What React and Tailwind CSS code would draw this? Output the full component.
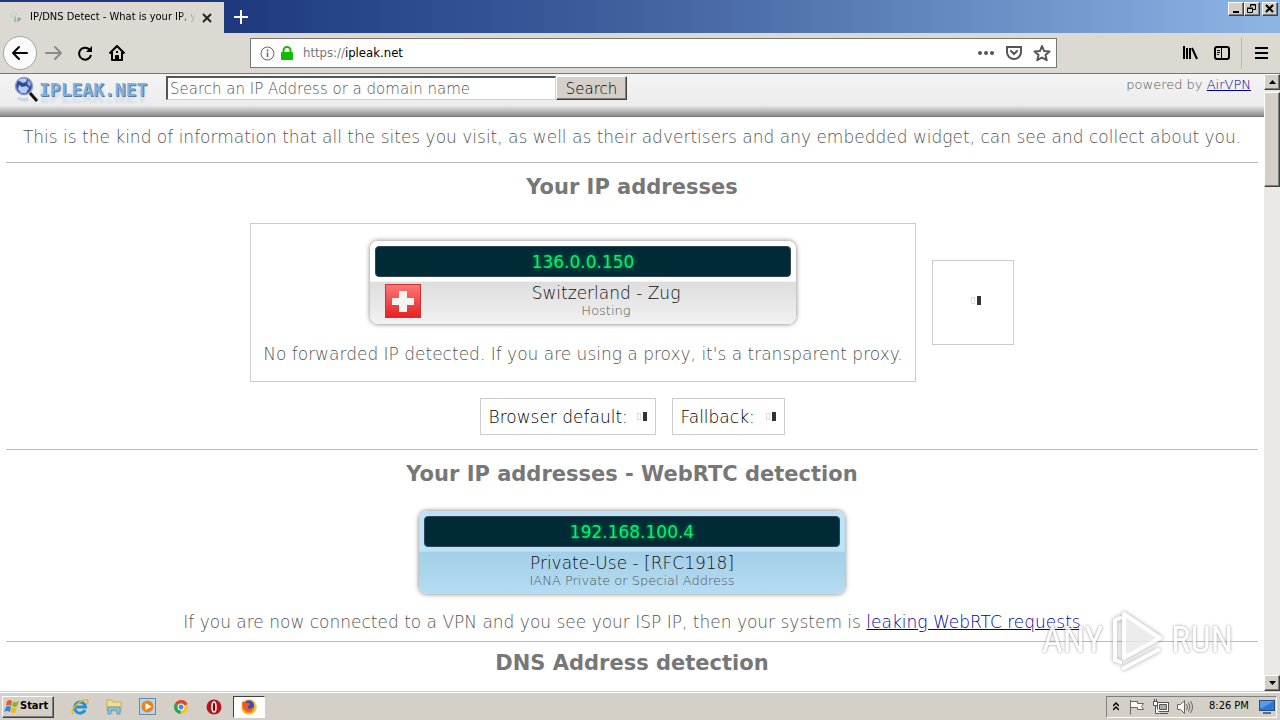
import { useState } from 'react';
import clsx from 'clsx';

const raised = 'border border-t-white border-l-white border-r-[#404040] border-b-[#404040] bg-[#d4d0c8] shadow-[inset_-1px_-1px_0_#808080]';

const TitleBar = () => (
  <div className="flex h-[33px] shrink-0 bg-linear-to-r from-[#1c357c] from-15% via-[#41619f] via-50% to-[#8db6e6]">
    <div className="mt-[2px] flex w-[224px] items-center bg-[#dcd8d2] pl-[10px]">
      <svg width="13" height="14" viewBox="0 0 13 14" className="shrink-0">
        <path d="M0 3h2M3 1h2M1 5l2 1M4 4l2 2M6 2l1 2" stroke="#8fd6ca" strokeWidth="1" />
        <path d="M5 6v5M8 11V7h2q1 1 0 2H8" stroke="#6fa56f" strokeWidth="1" fill="none" />
      </svg>
      <span className="ml-[7px] w-[166px] whitespace-nowrap bg-linear-to-r from-black from-90% to-transparent bg-clip-text text-[11px] text-transparent">
        IP/DNS Detect - What is your IP, y
      </span>
      <button aria-label="Close tab" className="ml-[5px]">
        <svg width="12" height="12" viewBox="0 0 12 12" stroke="#222" strokeWidth="2">
          <path d="M2 2l8 8M10 2l-8 8" />
        </svg>
      </button>
    </div>
    <button aria-label="New tab" className="ml-[9px] flex items-center">
      <svg width="16" height="16" viewBox="0 0 16 16" stroke="#fff" strokeWidth="2">
        <path d="M8 1v14M1 8h14" />
      </svg>
    </button>
    <div className="ml-auto flex h-[16px] pt-[2px] pr-[2px]">
      <button aria-label="Minimize" className={clsx(raised, 'h-[14px] w-[16px]')}>
        <svg width="13" height="12" viewBox="0 0 13 12"><path d="M4 8h6v2H4z" /></svg>
      </button>
      <button aria-label="Restore" className={clsx(raised, 'h-[14px] w-[16px]')}>
        <svg width="13" height="12" viewBox="0 0 13 12" fill="none" stroke="#000">
          <path d="M5.5 4V1.5h5v5H8M5 2h6M2.5 5.5h5v4h-5zM2 5h6" />
        </svg>
      </button>
      <button aria-label="Close" className={clsx(raised, 'ml-[2px] h-[14px] w-[16px]')}>
        <svg width="13" height="12" viewBox="0 0 13 12" stroke="#000" strokeWidth="2"><path d="M3 2l7 7M10 2L3 9" /></svg>
      </button>
    </div>
  </div>
);

const NavBar = () => (
  <div className="flex h-[41px] shrink-0 items-center border-b border-[#777] bg-[#dcd8d2] pl-[3px]">
    <button aria-label="Back" className="flex h-[34px] w-[34px] items-center justify-center rounded-full border border-[#a8a49e] bg-[#fafafa]">
      <svg width="18" height="16" viewBox="0 0 18 16" fill="none" stroke="#000" strokeWidth="2" strokeLinecap="round" strokeLinejoin="round">
        <path d="M16 8H2M8 2L2 8l6 6" />
      </svg>
    </button>
    <button aria-label="Forward" className="ml-[8px]">
      <svg width="18" height="16" viewBox="0 0 18 16" fill="none" stroke="#8d8a86" strokeWidth="2" strokeLinecap="round" strokeLinejoin="round">
        <path d="M1 8h15M10 2l6 6-6 6" />
      </svg>
    </button>
    <button aria-label="Reload" className="ml-[14px]">
      <svg width="16" height="16" viewBox="0 0 16 16" fill="none" stroke="#000" strokeWidth="2">
        <path d="M12.5 4.5A6 6 0 1 0 14 10" />
        <path d="M15 1v6H9z" fill="#000" stroke="none" />
      </svg>
    </button>
    <button aria-label="Home" className="ml-[15px]">
      <svg width="18" height="16" viewBox="0 0 18 16" fill="none" stroke="#000" strokeWidth="2" strokeLinejoin="round">
        <path d="M1.500 8.500L9 1l7.500 7.500M4 7v8h10V7" />
        <path d="M8 15v-4h2v4M9 6v2" />
      </svg>
    </button>
    <div className="ml-[124px] flex h-[30px] w-[807px] items-center border border-[#777] bg-white pr-[5px] pl-[9px]">
      <svg width="15" height="15" viewBox="0 0 15 15" fill="none" stroke="#666">
        <circle cx="7.500" cy="7.500" r="6.500" />
        <path d="M7.500 6.500V11M7.500 3.500v2" strokeWidth="1.500" />
      </svg>
      <svg width="12" height="15" viewBox="0 0 12 15" className="ml-[6px]">
        <path d="M2.500 7V4.500a3.500 3.500 0 0 1 7 0V7" fill="none" stroke="#12bc00" strokeWidth="2" />
        <rect y="6" width="12" height="8" rx="1" fill="#12bc00" />
      </svg>
      <span className="ml-[10px] grow text-[13px] text-black"><span className="text-[#777]">https://</span>ipleak.net</span>
      <button aria-label="Page actions">
        <svg width="16" height="16" viewBox="0 0 16 16" fill="#555">
          <circle cx="2" cy="8" r="2" /><circle cx="8" cy="8" r="2" /><circle cx="14" cy="8" r="2" />
        </svg>
      </button>
      <button aria-label="Save to Pocket" className="ml-[12px]">
        <svg width="16" height="16" viewBox="0 0 16 16" fill="none" stroke="#555" strokeWidth="2" strokeLinecap="round">
          <path d="M1 2h14v5a7 7 0 0 1-14 0z" /><path d="M5 6l3 3 3-3" />
        </svg>
      </button>
      <button aria-label="Bookmark" className="ml-[11px]">
        <svg width="18" height="18" viewBox="0 0 18 18" fill="none" stroke="#555" strokeWidth="2" strokeLinejoin="round">
          <path d="M9 2l2 5 5.500.500-4 3.500 1.200 5.200L9 13.500l-4.700 2.700L5.500 11l-4-3.500L7 7z" />
        </svg>
      </button>
    </div>
    <div className="ml-auto flex items-center">
      <button aria-label="Library">
        <svg width="16" height="16" viewBox="0 0 16 16" stroke="#000" strokeWidth="2">
          <path d="M2 1v13M5 3v11M8 3v11M10 3l5 11" />
        </svg>
      </button>
      <button aria-label="Sidebars" className="ml-[16px]">
        <svg width="16" height="14" viewBox="0 0 16 14" fill="none" stroke="#000" strokeWidth="2">
          <rect x="1" y="1" width="14" height="12" rx="2" /><path d="M7.500 1v12" strokeWidth="1" />
          <path d="M3 4.500h3M3 6.500h3M3 8.500h2" strokeWidth="1" />
        </svg>
      </button>
      <div className="ml-[11px] h-[32px] w-px bg-[#bcb8b0]" />
      <button aria-label="Menu" className="mr-[12px] ml-[13px]">
        <svg width="13" height="14" viewBox="0 0 13 14" stroke="#000" strokeWidth="2"><path d="M0 2h13M0 7h13M0 12h13" /></svg>
      </button>
    </div>
  </div>
);

const SiteHeader = () => {
  const [query, setQuery] = useState('');
  return (
    <header className="flex h-[43px] items-start border-b border-[#777] bg-linear-to-b from-[#f4f4f4] via-[#ececec] via-75% to-[#8c8c8c] pl-[14px]">
      <svg width="25" height="28" viewBox="0 0 25 28" className="mt-[2px] shrink-0">
        <circle cx="10" cy="10" r="8.500" fill="#34499c" stroke="#8d9cc9" strokeWidth="1.500" />
        <path d="M4 4q5-3 9-1l-1 3-3 1-2-1zM5 9l3 2 4-1 3 2-3 5-5 0-3-4z" fill="#b9caf0" />
        <path d="M14 4l3 3-1 4-3-3z" fill="#8fa8e0" />
        <path d="M16 17l7 8" stroke="#111" strokeWidth="3" />
        <path d="M4 22q5 3 10 1" stroke="#ccd5de" strokeWidth="3" fill="none" />
      </svg>
      <span className="mt-[4px] w-[109px] whitespace-nowrap font-['DejaVu_Sans_Mono',monospace] text-[18px] leading-[24px] font-bold text-[#7fb0da] [text-shadow:1px_1px_0_#5878a0,0_7px_3px_#d0dde8]">IPLEAK.NET</span>
      <form className="mt-[2px] ml-[18px] flex h-[24px]" onSubmit={(e) => e.preventDefault()}>
        <input
          aria-label="Search an IP Address or a domain name"
          placeholder="Search an IP Address or a domain name"
          value={query}
          onChange={(e) => setQuery(e.target.value)}
          className="w-[390px] border-t-2 border-r border-b border-l-2 border-t-[#555] border-r-[#d4d0c8] border-b-[#d4d0c8] border-l-[#555] bg-white pt-[2px] pl-[2px] text-[15px] text-black placeholder:text-[#555]"
        />
        <button className={clsx(raised, 'w-[71px] pt-[2px] text-[15px] leading-[20px] text-black')}>Search</button>
      </form>
      <div className="mt-[2px] mr-[13px] ml-auto text-[13px] leading-[18px]">
        powered by <a href="#airvpn" className="text-[#0000a0] underline">AirVPN</a>
      </div>
    </header>
  );
};

const Loading = () => (
  <span role="img" aria-label="Loading" className="flex items-center gap-[2px]">
    <span className="h-[7px] w-[4px] border border-[#ddd]" />
    <span className="h-[9px] w-[4px] bg-[#333]" />
  </span>
);

const SwissFlag = () => (
  <svg width="36" height="34" viewBox="0 0 36 34" className="shrink-0">
    <defs>
      <linearGradient id="flag" x2="0" y2="1"><stop stopColor="#f77" /><stop offset="1" stopColor="#e42222" /></linearGradient>
    </defs>
    <rect x=".5" y=".5" width="35" height="33" fill="url(#flag)" stroke="#c33" />
    <path d="M14 7h8v7h7v7h-7v7h-8v-7H7v-7h7z" fill="#f4f4f4" />
  </svg>
);

const IpCard = ({ ip, place, note, flag, priv }) => (
  <div
    className={clsx(
      'w-[426px] rounded-[8px] p-[5px] shadow-[0_0_5px_#777]',
      priv
        ? 'bg-linear-to-b from-[#bde2f8] from-48% via-[#a3cfe8] via-50% to-[#b5dcf3]'
        : 'bg-linear-to-b from-white from-48% via-[#dedede] via-50% to-[#f1f1f1]'
    )}
  >
    <div className="h-[31px] rounded-[4px] border border-[#345] bg-[#002b36] text-center text-[17px] leading-[30px] font-normal text-[#00f070] [text-shadow:0_0_4px_#00a050]">{ip}</div>
    <div className="mt-[7px] flex h-[35px] items-start">
      {flag && <div className="pl-[10px]"><SwissFlag /></div>}
      <div className="grow text-center">
        <div className="text-[17px] leading-[19px] text-[#111]">{place}</div>
        <div className="text-[13px] leading-[15px] text-[#555]">{note}</div>
      </div>
    </div>
  </div>
);

const Heading = ({ children }) => (
  <h2 className="text-center text-[21px] leading-[26px] font-bold text-[#777]">{children}</h2>
);

const Page = () => (
  <div className="min-w-0 grow overflow-hidden bg-white font-[Verdana,'DejaVu_Sans',sans-serif] font-extralight text-[#555]">
    <SiteHeader />
    <main className="px-[6px] text-[17px] leading-[20px]">
      <p className="pt-[10px] pb-[15px] text-center whitespace-nowrap">
        This is the kind of information that all the sites you visit, as well as their advertisers and any embedded widget, can see and collect about you.
      </p>
      <section className="border-t border-[#bbb] pt-[11px] pb-[14px]">
        <Heading>Your IP addresses</Heading>
        <div className="mt-[23px] flex items-center justify-center gap-[16px]">
          <div className="flex h-[159px] w-[666px] flex-col items-center border border-[#ccc] pt-[17px]">
            <IpCard ip="136.0.0.150" place="Switzerland - Zug" note="Hosting" flag />
            <p className="mt-[20px] whitespace-nowrap">No forwarded IP detected. If you are using a proxy, it's a transparent proxy.</p>
          </div>
          <div className="flex h-[85px] w-[82px] items-center justify-center border border-[#ccc] pb-[4px] pl-[6px]">
            <Loading />
          </div>
        </div>
        <div className="mt-[16px] flex justify-center gap-[16px] text-black">
          <div className="flex h-[37px] w-[176px] items-center justify-between border border-[#ccc] px-[8px]">Browser default: <Loading /></div>
          <div className="flex h-[37px] w-[113px] items-center justify-between border border-[#ccc] px-[8px]">Fallback: <Loading /></div>
        </div>
      </section>
      <section className="border-t border-[#bbb] pt-[11px] pb-[9px]">
        <Heading>Your IP addresses - WebRTC detection</Heading>
        <div className="mt-[24px] flex justify-center">
          <IpCard ip="192.168.100.4" place="Private-Use - [RFC1918]" note="IANA Private or Special Address" priv />
        </div>
        <p className="mt-[18px] text-center whitespace-nowrap">
          If you are now connected to a VPN and you see your ISP IP, then your system is <a href="#webrtc" className="text-[#0000a0] underline">leaking WebRTC requests</a>
        </p>
      </section>
      <section className="border-t border-[#bbb] pt-[8px]">
        <Heading>DNS Address detection</Heading>
      </section>
    </main>
  </div>
);

const Scrollbar = () => (
  <div className="flex w-[16px] shrink-0 flex-col bg-[#ebe9e5]">
    <button aria-label="Scroll up" className={clsx(raised, 'flex h-[16px] items-center justify-center')}>
      <svg width="7" height="4" viewBox="0 0 7 4"><path d="M0 4h7L3.500 0z" /></svg>
    </button>
    <div className={clsx(raised, 'mt-[2px] h-[95px]')} />
    <button aria-label="Scroll down" className={clsx(raised, 'mt-auto flex h-[16px] items-center justify-center')}>
      <svg width="7" height="4" viewBox="0 0 7 4"><path d="M0 0h7L3.500 4z" /></svg>
    </button>
  </div>
);

const Taskbar = () => (
  <div className="flex h-[28px] shrink-0 items-center border-t border-white bg-[#d4d0c8]">
    <button className={clsx(raised, 'ml-[2px] flex h-[22px] w-[52px] items-center pl-[1px] text-[11px] font-bold')}>
      <svg width="16" height="16" viewBox="0 0 16 16" className="shrink-0">
        <path d="M3 2q3-2 5 0L7 7Q5 5 2 7z" fill="#e8592b" />
        <path d="M9 3q3 1 6-1l-2 5q-2 2-5 0z" fill="#7db928" />
        <path d="M2 8q3-2 5 0l-1 5q-3-2-6 0z" fill="#2f87d8" />
        <path d="M8 8q2 2 5 0l-2 6q-2 1-4-1z" fill="#f5b71c" />
      </svg>
      Start
    </button>
    <div className="ml-[17px] flex items-center gap-[17px]">
      <button aria-label="Internet Explorer">
        <svg width="18" height="18" viewBox="0 0 18 18" fill="none">
          <path d="M14 12a5.500 5.500 0 1 1 .500-3H5" stroke="#238fd6" strokeWidth="3" />
          <path d="M2 16C-1 12 9 1 16 2q2 1 0 4" stroke="#e3b62f" strokeWidth="1.500" />
        </svg>
      </button>
      <button aria-label="Explorer">
        <svg width="16" height="18" viewBox="0 0 16 18">
          <path d="M1 2h5l1 2h8v9H1z" fill="#f3dc86" stroke="#c9ac50" />
          <path d="M2 9h12v7h-3v-4H5v4H2z" fill="#8ac5e8" stroke="#5798c2" />
        </svg>
      </button>
      <button aria-label="Media Player">
        <svg width="17" height="17" viewBox="0 0 17 17">
          <rect x=".5" y=".5" width="16" height="16" fill="#b7d5ed" stroke="#5a8dbb" />
          <circle cx="8.500" cy="8.500" r="6" fill="#ef8118" /><path d="M6.500 5v7l6-3.500z" fill="#fff" />
        </svg>
      </button>
      <button aria-label="Chrome">
        <svg width="16" height="16" viewBox="0 0 16 16">
          <circle cx="8" cy="8" r="7" fill="#f4c623" />
          <path d="M8 8L2 4.500A7 7 0 0 1 14.500 5z" fill="#dd4437" /><path d="M8 8L2 4.500A7 7 0 0 0 7.500 15z" fill="#25a15b" />
          <circle cx="8" cy="8" r="3.500" fill="#fff" /><circle cx="8" cy="8" r="2.500" fill="#4a87ee" />
        </svg>
      </button>
      <button aria-label="Opera">
        <svg width="16" height="16" viewBox="0 0 16 16">
          <circle cx="8" cy="8" r="7.500" fill="#b5161b" /><ellipse cx="8" cy="8" rx="2" ry="5" fill="#7b080b" stroke="#fff" strokeWidth="1.500" />
        </svg>
      </button>
    </div>
    <button aria-label="Firefox" className="ml-[11px] flex h-[22px] w-[32px] items-center justify-center border border-t-[#404040] border-r-white border-b-white border-l-[#404040] bg-white">
      <svg width="16" height="16" viewBox="0 0 16 16">
        <circle cx="8" cy="8" r="7.500" fill="#ff9d1a" />
        <circle cx="8" cy="6.500" r="5" fill="#3550b8" />
        <path d="M1 4l1-2 2 2q3-1 5 1L7 7q-1 3 2 3l3-2q0 5-5 5-5-1-6-9z" fill="#f4571f" />
        <path d="M12 2q5 4 3 9-3 5-8 4 6-1 7-6 0-4-2-7z" fill="#ffcf2e" />
      </svg>
    </button>
    <div className="mr-[3px] ml-auto flex h-[22px] w-[171px] items-center border border-t-[#808080] border-r-white border-b-white border-l-[#808080] pl-[6px]">
      <svg width="6" height="9" viewBox="0 0 6 9" fill="none" stroke="#000" strokeWidth="1.500"><path d="M0 4l3-3 3 3M0 8l3-3 3 3" /></svg>
      <svg width="16" height="16" viewBox="0 0 16 16" className="ml-[10px]" fill="#fff" stroke="#666">
        <path d="M1.500 1v14.500M1.500 2.500h7v2h6l-2 3 2 3h-6v-2h-7z" />
      </svg>
      <svg width="16" height="16" viewBox="0 0 16 16" className="ml-[8px]" fill="#fff" stroke="#555">
        <rect x="4.500" y="3.500" width="11" height="9" /><path d="M6.500 5.500h7v5h-7z" fill="#aaa" /><path d="M7 14.500h8M.500 2.500h4v4h-4zM1.500 0v2M3.500 0v2M2.500 6.500v8h4" />
      </svg>
      <svg width="16" height="16" viewBox="0 0 16 16" className="ml-[8px]" fill="#fff" stroke="#666">
        <path d="M.500 5.500h3l4-4v13l-4-4h-3z" /><path d="M9.500 5q2 3 0 6M11.500 3.500q3 4.500 0 9M13.500 2q4 6 0 12" fill="none" />
      </svg>
      <span className="ml-[16px] text-[11px] whitespace-nowrap">8:26 PM</span>
      <svg width="16" height="14" viewBox="0 0 16 14" className="mr-[1px] ml-auto">
        <rect x=".5" y=".5" width="15" height="10" fill="#2c78d4" stroke="#244e86" /><path d="M1 1h14L3 8H1z" fill="#5b9be6" /><path d="M4 12h8v2H4z" fill="#667" />
      </svg>
    </div>
  </div>
);

const Watermark = () => (
  <div className="pointer-events-none absolute right-[47px] bottom-[48px] flex h-[64px] items-center gap-[5px] font-['Roboto_Condensed',Roboto,sans-serif] text-[36px] text-white opacity-80 [text-shadow:0_0_3px_#777]">
    ANY
    <svg width="58" height="64" viewBox="0 0 58 64" fill="none" className="drop-shadow-[0_0_2px_#888]" strokeLinejoin="round" strokeLinecap="round">
      <path d="M16 6v44l36-20z" fill="#e8e8e8" stroke="#fff" strokeWidth="4" />
      <path d="M12 10l-5 2v40l5 2M16 60l34-18" stroke="#fff" strokeWidth="4" />
    </svg>
    RUN
  </div>
);

const App = () => (
  <div className="relative flex h-screen flex-col overflow-hidden bg-white font-[Tahoma,'DejaVu_Sans_Condensed','DejaVu_Sans',sans-serif] text-black">
    <TitleBar />
    <NavBar />
    <div className="flex min-h-0 grow border-b border-[#d4d0c8]">
      <Page />
      <Scrollbar />
    </div>
    <Taskbar />
    <Watermark />
  </div>
);

export default App;
